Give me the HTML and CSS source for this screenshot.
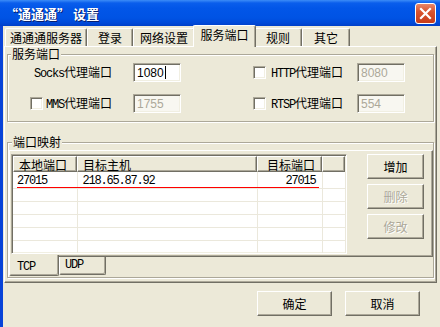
FILE: index.html
```html
<!DOCTYPE html>
<html lang="zh-CN">
<head>
    <meta charset="UTF-8">
    <title>“通通通” 设置</title>
    <link rel="stylesheet" href="styles.css">
</head>
<body>
<div class="window">
    <div class="titlebar">
        <span class="title">“通通通” 设置</span>
        <button class="close-btn" aria-label="关闭">
            <svg width="19" height="19" viewBox="0 0 19 19">
                <path d="M5 5 L14 14 M14 5 L5 14" stroke="#fff" stroke-width="2.2" stroke-linecap="square"/>
            </svg>
        </button>
    </div>

    <div class="frame">
        <div class="tabs">
            <div class="tab tab-server">通通通服务器</div>
            <div class="tab tab-login">登录</div>
            <div class="tab tab-net">网络设置</div>
            <div class="tab tab-active">服务端口</div>
            <div class="tab tab-rules">规则</div>
            <div class="tab tab-other">其它</div>
        </div>

        <div class="tab-panel">
            <fieldset class="group group-ports">
                <legend>服务端口</legend>
                <div class="port-row">
                    <div class="port-left">
                        <label class="port-label"><span class="lat">Socks</span>代理端口</label>
                    </div>
                    <span class="edit">1080<span class="caret"></span></span>
                    <div class="port-right">
                        <span class="checkbox"></span>
                        <label class="port-label"><span class="lat">HTTP</span>代理端口</label>
                    </div>
                    <span class="edit disabled">8080</span>
                </div>
                <div class="port-row">
                    <div class="port-left">
                        <span class="checkbox check-left"></span>
                        <label class="port-label"><span class="lat">MMS</span>代理端口</label>
                    </div>
                    <span class="edit disabled">1755</span>
                    <div class="port-right">
                        <span class="checkbox"></span>
                        <label class="port-label"><span class="lat">RTSP</span>代理端口</label>
                    </div>
                    <span class="edit disabled">554</span>
                </div>
            </fieldset>

            <fieldset class="group group-map">
                <legend>端口映射</legend>
                <div class="map-panel">
                    <div class="listview">
                        <div class="lv-header">
                            <div class="lv-col col-local">本地端口</div>
                            <div class="lv-col col-host">目标主机</div>
                            <div class="lv-col col-port">目标端口</div>
                            <div class="lv-col col-rest"></div>
                        </div>
                        <div class="lv-body">
                            <table class="lv-table">
                                <colgroup>
                                    <col class="col-local">
                                    <col class="col-host">
                                    <col class="col-port">
                                    <col class="col-rest">
                                </colgroup>
                                <tr class="row-first">
                                    <td class="cell-local lat">27015</td>
                                    <td class="cell-host lat">218.65.87.92</td>
                                    <td class="cell-port lat">27015</td>
                                    <td></td>
                                </tr>
                                <tr><td></td><td></td><td></td><td></td></tr>
                                <tr><td></td><td></td><td></td><td></td></tr>
                                <tr><td></td><td></td><td></td><td></td></tr>
                                <tr><td></td><td></td><td></td><td></td></tr>
                                <tr><td></td><td></td><td></td><td></td></tr>
                                <tr><td></td><td></td><td></td><td></td></tr>
                            </table>
                            <div class="row-mark"></div>
                        </div>
                    </div>
                    <div class="map-buttons">
                        <button class="btn btn-side">增加</button>
                        <button class="btn btn-side" disabled>删除</button>
                        <button class="btn btn-side" disabled>修改</button>
                    </div>
                </div>
                <div class="bottom-tabs">
                    <div class="btab btab-active lat">TCP</div>
                    <div class="btab lat">UDP</div>
                </div>
            </fieldset>
        </div>

        <div class="dialog-buttons">
            <button class="btn btn-dialog">确定</button>
            <button class="btn btn-dialog">取消</button>
        </div>
    </div>
</div>
</body>
</html>
```

FILE: styles.css
```css
body {
    margin: 0;
    width: 440px;
    height: 327px;
    overflow: hidden;
    background-color: #ECE9D8;
    font-family: "Noto Sans CJK SC", sans-serif;
    font-size: 12px;
    line-height: 14px;
    color: #000;
}

.lat {
    font-family: "Liberation Mono", "Noto Sans CJK SC", monospace;
    letter-spacing: -1.2px;
}

/* title bar */
.titlebar {
    height: 26px;
    display: flex;
    align-items: center;
    justify-content: space-between;
    padding: 0 4px 0 5px;
    background: linear-gradient(to bottom, #3C8CF7 0, #0A5EEC 3px, #0256E8 8px, #0053E4 18px, #0049D8 23px, #003FC8 26px);
}

.title {
    color: #fff;
    font-weight: bold;
    font-size: 13px;
    text-shadow: 1px 1px 0 #0A1F6E;
    padding-top: 1px;
}

.close-btn {
    width: 21px;
    height: 21px;
    padding: 0;
    border: 1px solid #fff;
    border-radius: 3px;
    background: linear-gradient(to bottom, #E8876A 0, #D9542F 40%, #C73C1A 100%);
    display: flex;
    align-items: center;
    justify-content: center;
}

/* window body */
.frame {
    height: 301px;
    border-left: 3px solid #0843D8;
}

.tabs {
    display: flex;
    align-items: flex-end;
    height: 20px;
    margin-left: 2px;
}

.tab {
    box-sizing: border-box;
    height: 18px;
    padding-top: 2px;
    text-align: center;
    line-height: 13px;
    background-color: #ECE9D8;
    border-top: 1px solid #fff;
    border-left: 1px solid #fff;
    border-right: 1px solid #716F64;
    box-shadow: inset -1px 0 0 #ACA899;
    border-radius: 2px 2px 0 0;
}

.tab-server { width: 82px; }
.tab-login { width: 46px; }
.tab-net { width: 62px; }
.tab-rules { width: 48px; }
.tab-other { width: 48px; }

.tab-active {
    width: 63px;
    height: 22px;
    margin: 0 -2px -1px;
    padding-top: 2px;
    position: relative;
    z-index: 1;
}

.tab-panel {
    box-sizing: border-box;
    width: 433px;
    height: 237px;
    margin-left: 1px;
    padding: 1px 0 0 2px;
    border: 1px solid;
    border-color: #fff #716F64 #716F64 #fff;
    box-shadow: inset -1px -1px 0 #ACA899;
}

/* group boxes */
.group {
    margin: 0;
    padding: 0;
    width: 427px;
    box-sizing: border-box;
    border: 1px solid #ACA899;
    box-shadow: inset 1px 1px 0 #fff, 1px 1px 0 #fff;
}

.group legend {
    padding: 0 1px;
    margin-left: 3px;
    line-height: 12px;
    background-color: #ECE9D8;
}

.group-ports {
    padding: 3px 0 8px;
}

.port-row {
    display: flex;
    align-items: center;
    height: 19px;
}

.port-row + .port-row {
    margin-top: 12px;
}

.port-left {
    width: 125px;
    display: flex;
    align-items: center;
    justify-content: flex-end;
    padding-right: 21px;
    box-sizing: border-box;
}

.check-left {
    margin-left: 22px;
    margin-right: auto;
}

.port-right {
    width: 176px;
    display: flex;
    align-items: center;
    padding-left: 72px;
    box-sizing: border-box;
}

.port-right .checkbox {
    margin-right: 5px;
}

.port-label {
    white-space: nowrap;
}

.checkbox {
    box-sizing: border-box;
    width: 13px;
    height: 13px;
    background-color: #fff;
    border: 1px solid;
    border-color: #ACA899 #fff #fff #ACA899;
    box-shadow: inset 1px 1px 0 #716F64, inset -1px -1px 0 #F1EFE2;
}

.edit {
    box-sizing: border-box;
    width: 48px;
    height: 19px;
    padding: 2px 0 0 3px;
    background-color: #fff;
    border: 1px solid;
    border-color: #ACA899 #fff #fff #ACA899;
    box-shadow: inset 1px 1px 0 #716F64, inset -1px -1px 0 #F1EFE2;
    font-family: "Liberation Sans", sans-serif;
    font-size: 12px;
    line-height: 14px;
    display: flex;
}

.edit.disabled {
    background-color: #F8F7F1;
    color: #ACA899;
}

.caret {
    width: 1px;
    height: 13px;
    margin-left: 1px;
    background-color: #000;
}

/* port mapping */
.group-map {
    margin-top: 14px;
    padding: 2px 0 1px 1px;
}

.map-panel {
    box-sizing: border-box;
    height: 107px;
    display: flex;
    padding: 3px 0 0 1px;
    border: 1px solid;
    border-color: #fff #716F64 #716F64 #fff;
    box-shadow: inset -1px -1px 0 #ACA899;
}

.listview {
    box-sizing: border-box;
    width: 336px;
    height: 100px;
    background-color: #fff;
    border: 1px solid;
    border-color: #ACA899 #fff #fff #ACA899;
    box-shadow: inset 1px 1px 0 #716F64, inset -1px -1px 0 #F1EFE2;
    padding: 1px;
    overflow: hidden;
}

.lv-header {
    display: flex;
    height: 16px;
}

.lv-col {
    box-sizing: border-box;
    height: 16px;
    padding: 1px 0 0 5px;
    background-color: #ECE9D8;
    border: 1px solid;
    border-color: #fff #716F64 #716F64 #fff;
    box-shadow: inset -1px -1px 0 #ACA899;
    white-space: nowrap;
    line-height: 13px;
}

.col-local { width: 64px; }
.col-host { width: 180px; }
.col-port { width: 65px; }
.col-rest { width: 23px; }

.lv-header .col-port {
    text-align: right;
    padding: 1px 6px 0 0;
}

.lv-body {
    position: relative;
}

.lv-table {
    border-collapse: collapse;
    table-layout: fixed;
    width: 332px;
}

.lv-table td {
    height: 12px;
    padding: 0;
    border-right: 1px solid #EBE8DC;
    border-bottom: 1px solid #EBE8DC;
    line-height: 12px;
    font-size: 12px;
    white-space: nowrap;
    overflow: hidden;
}

.lv-table .row-first td {
    height: 15px;
    vertical-align: bottom;
    padding-bottom: 1px;
}

.lv-table .cell-local { padding-left: 4px; }
.lv-table .cell-host { padding-left: 5px; }
.lv-table .cell-port {
    text-align: right;
    padding-right: 6px;
}

.row-mark {
    position: absolute;
    left: 4px;
    top: 15px;
    width: 302px;
    height: 1px;
    background-color: #FF0000;
}

.map-buttons {
    display: flex;
    flex-direction: column;
    gap: 5px;
    margin-left: 20px;
}

.btn {
    box-sizing: border-box;
    height: 25px;
    padding: 0;
    background-color: #ECE9D8;
    border: 1px solid;
    border-color: #fff #716F64 #716F64 #fff;
    box-shadow: inset -1px -1px 0 #ACA899;
    font-family: "Noto Sans CJK SC", sans-serif;
    font-size: 12px;
    color: #000;
}

.btn:disabled {
    color: #ACA899;
    text-shadow: 1px 1px 0 #fff;
}

.btn-side {
    width: 57px;
}

.bottom-tabs {
    display: flex;
    align-items: flex-start;
    margin-top: -2px;
}

.btab {
    box-sizing: border-box;
    height: 18px;
    width: 47px;
    padding: 1px 0 0 5px;
    background-color: #ECE9D8;
    border-left: 1px solid #fff;
    border-right: 1px solid #716F64;
    border-bottom: 1px solid #716F64;
    box-shadow: inset -1px -1px 0 #ACA899;
    border-radius: 0 0 2px 2px;
    margin-top: 2px;
}

.btab-active {
    width: 50px;
    height: 21px;
    margin-top: 0;
    padding: 5px 0 0 7px;
    position: relative;
    z-index: 1;
}

/* dialog buttons */
.dialog-buttons {
    display: flex;
    justify-content: flex-end;
    gap: 13px;
    padding-right: 20px;
    margin-top: 8px;
}

.btn-dialog {
    width: 75px;
}
```
